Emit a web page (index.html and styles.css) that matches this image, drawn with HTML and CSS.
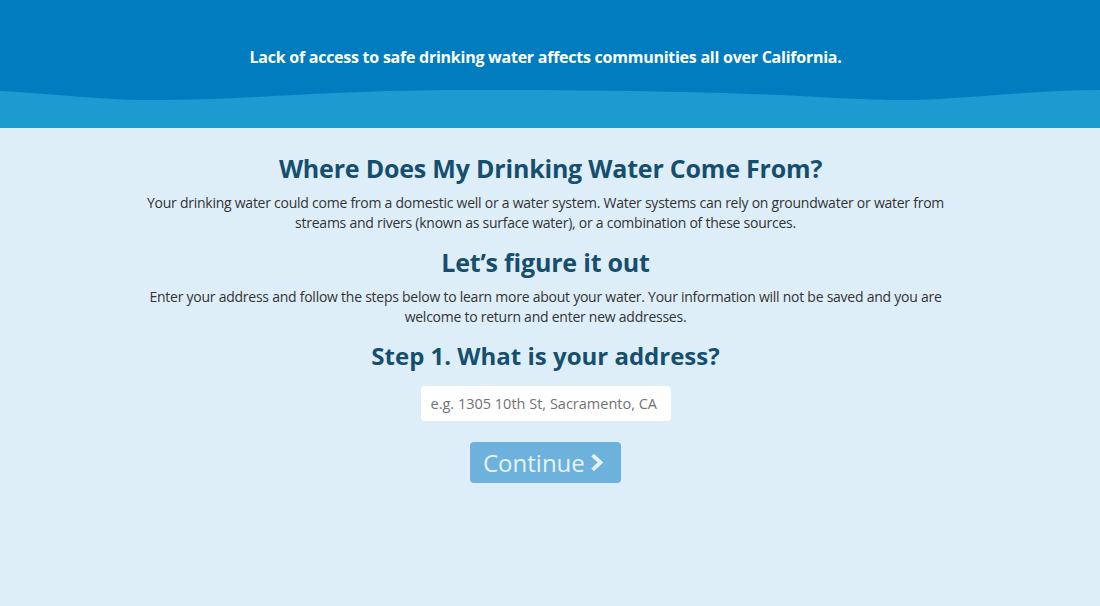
FILE: index.html
```html
<!DOCTYPE html>
<html lang="en">
<head>
<meta charset="utf-8">
<title>Where Does My Drinking Water Come From?</title>
<link rel="stylesheet" href="styles.css">
</head>
<body>
<header class="hero">
  <div class="hero-top">
    <p class="hero-text">Lack of access to safe drinking water affects communities all over California.</p>
  </div>
  <svg class="wave" viewBox="0 0 1100 38" preserveAspectRatio="none" aria-hidden="true">
    <rect x="0" y="0" width="1100" height="38" fill="#1b9bcf"/>
    <path d="M0 0 L0 1 C60 4 100 10 150 10 C250 10 330 0 460 0 C600 0 720 2 800 6 C850 9 880 10 900 10 C960 10 1030 0 1100 0 Z" fill="#017dbf"/>
  </svg>
</header>
<main class="content">
  <h1 class="title main">Where Does My Drinking Water Come From?</h1>
  <p class="lead">Your drinking water could come from a domestic well or a water system. Water systems can rely on groundwater or water from streams and rivers (known as surface water), or a combination of these sources.</p>
  <h2 class="title sub">Let’s figure it out</h2>
  <p class="lead">Enter your address and follow the steps below to learn more about your water. Your information will not be saved and you are welcome to return and enter new addresses.</p>
  <h3 class="step">Step 1. What is your address?</h3>
  <input class="address" type="text" placeholder="e.g. 1305 10th St, Sacramento, CA">
  <button class="continue" type="button">Continue
    <svg class="chev" viewBox="0 0 13 17" aria-hidden="true"><path d="M3 2.5 L9.5 8.5 L3 14.5" fill="none" stroke="currentColor" stroke-width="3.8" stroke-linecap="square" stroke-linejoin="miter"/></svg>
  </button>
</main>
</body>
</html>
```
FILE: styles.css
```css
html, body {
  margin: 0;
  padding: 0;
}
body {
  background: #deeef9;
  font-family: "Open Sans", "DejaVu Sans", sans-serif;
  color: #333;
  height: 606px;
  overflow: hidden;
}
.hero {
  display: flex;
  flex-direction: column;
}
.hero-top {
  background: #017dbf;
  height: 90px;
  display: flex;
  justify-content: center;
  padding-right: 9px;
}
.hero-text {
  margin: 46px 0 0;
  color: #fff;
  font-weight: 700;
  font-size: 16px;
  line-height: 22px;
  letter-spacing: -0.25px;
}
.wave {
  display: block;
  width: 100%;
  height: 38px;
}
.content {
  display: flex;
  flex-direction: column;
  align-items: center;
  text-align: center;
  max-width: 820px;
  margin: 0 auto;
  padding-right: 9px;
}
.title {
  margin: 0;
  color: #164f6e;
  font-weight: 700;
  font-size: 25px;
  line-height: 32px;
  letter-spacing: -0.2px;
}
.title.main {
  margin-top: 24px;
  padding-left: 10px;
}
.title.sub {
  margin-top: 13px;
}
.lead {
  margin: 9px 0 0;
  font-size: 14px;
  line-height: 20px;
  letter-spacing: -0.25px;
  color: #333;
}
.step {
  margin: 13px 0 0;
  color: #164f6e;
  font-weight: 700;
  font-size: 24px;
  line-height: 32px;
}
.address {
  margin-top: 14px;
  width: 250px;
  height: 35px;
  box-sizing: border-box;
  border: none;
  border-radius: 4px;
  background: #fff;
  padding: 0 10px;
  font-family: "Open Sans", sans-serif;
  font-size: 14.5px;
  color: #333;
  outline: none;
}
.address::placeholder {
  color: #727272;
}
.continue {
  margin-top: 21px;
  width: 151px;
  height: 41px;
  border: none;
  border-radius: 4px;
  background: #6db2dc;
  color: #e6f2fa;
  font-family: "Open Sans", sans-serif;
  font-size: 24px;
  display: flex;
  align-items: center;
  justify-content: flex-start;
  gap: 6px;
  padding: 0 0 0 13px;
}
.chev {
  width: 13px;
  height: 17px;
}
```
